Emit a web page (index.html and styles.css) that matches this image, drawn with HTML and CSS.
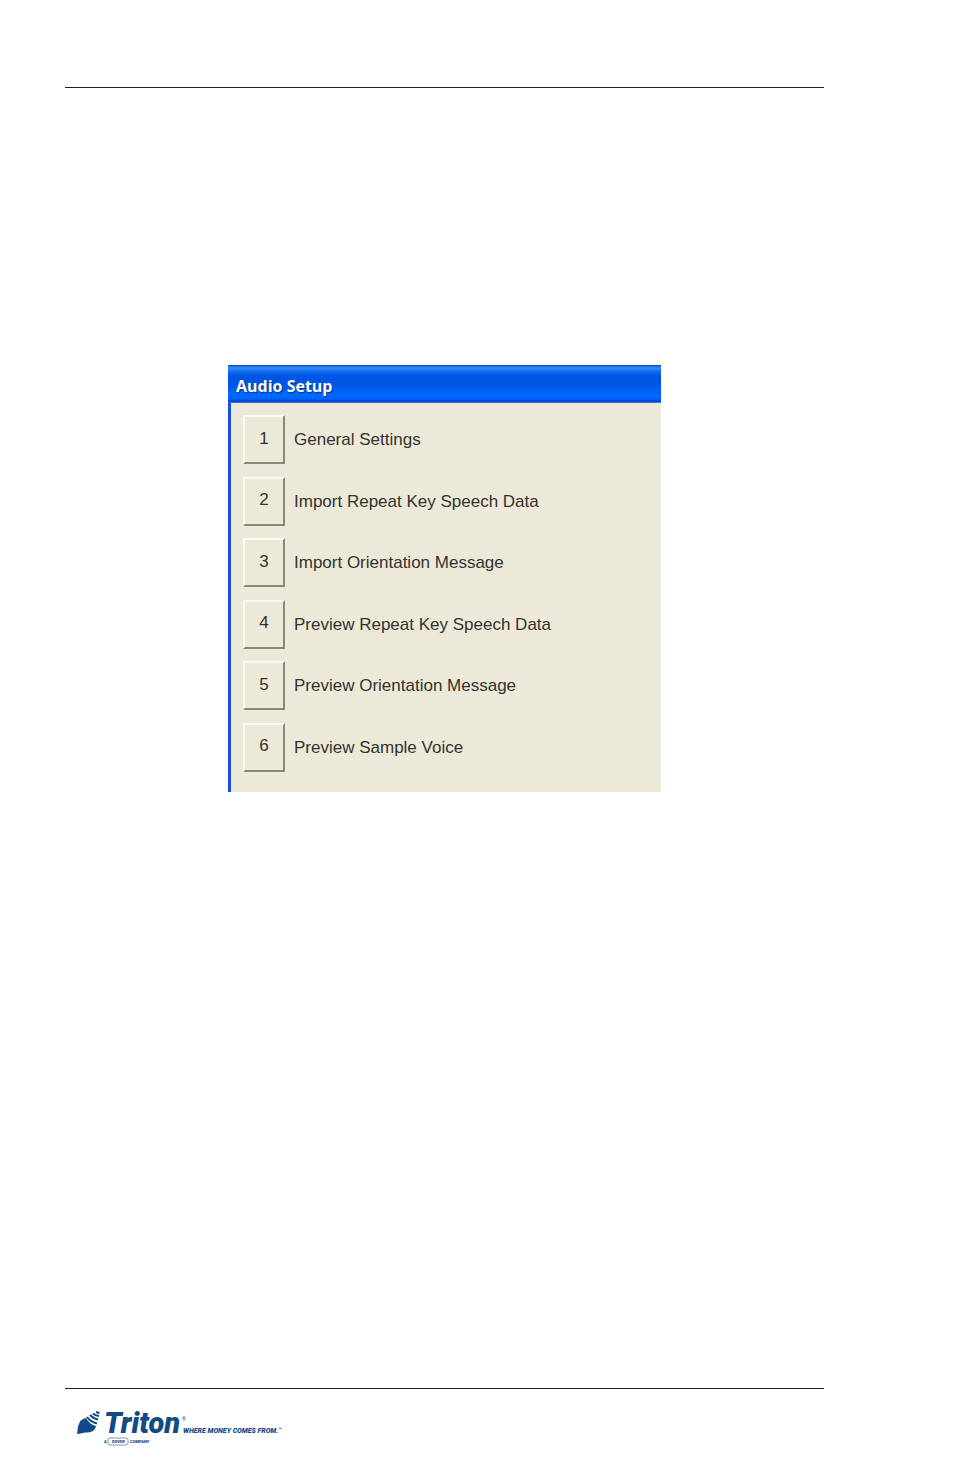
FILE: index.html
```html
<!DOCTYPE html>
<html lang="en">
<head>
<meta charset="utf-8">
<meta name="viewport" content="width=device-width, initial-scale=1">
<title>Audio Setup</title>
<link rel="stylesheet" href="styles.css">
</head>
<body>
<div class="page">
  <header class="page-header"></header>
  <main class="page-body">
    <section class="window" aria-labelledby="window-title">
      <h1 class="window-title" id="window-title">Audio Setup</h1>
      <ul class="menu">
        <li class="menu-item"><button class="key" id="key-1" aria-labelledby="key-1 label-1">1</button><label class="menu-label" id="label-1" for="key-1">General Settings</label></li>
        <li class="menu-item"><button class="key" id="key-2" aria-labelledby="key-2 label-2">2</button><label class="menu-label" id="label-2" for="key-2">Import Repeat Key Speech Data</label></li>
        <li class="menu-item"><button class="key" id="key-3" aria-labelledby="key-3 label-3">3</button><label class="menu-label" id="label-3" for="key-3">Import Orientation Message</label></li>
        <li class="menu-item"><button class="key" id="key-4" aria-labelledby="key-4 label-4">4</button><label class="menu-label" id="label-4" for="key-4">Preview Repeat Key Speech Data</label></li>
        <li class="menu-item"><button class="key" id="key-5" aria-labelledby="key-5 label-5">5</button><label class="menu-label" id="label-5" for="key-5">Preview Orientation Message</label></li>
        <li class="menu-item"><button class="key" id="key-6" aria-labelledby="key-6 label-6">6</button><label class="menu-label" id="label-6" for="key-6">Preview Sample Voice</label></li>
      </ul>
    </section>
  </main>
  <footer class="page-footer">
    <svg class="logo" width="210" height="40" viewBox="0 0 210 40" role="img" aria-label="Triton. Where money comes from.">
      <path class="logo-ink" d="M0 27 C1 24 0 21 2 17 C3 13 6 12 9 11 C11 15 15 18 19 19 C18 24 14 25.500 9 25.500 C6 25.500 3 27 0 27Z"/>
      <path class="logo-stroke" d="M10 10 Q13 14.500 20 16.500 M13 8 Q16 11.500 21 12.500 M16 6.500 Q18 8.500 22 9 M19 5 L22.500 6"/>
      <text class="logo-word" x="27" y="26">Triton</text>
      <text class="logo-reg" x="105" y="14">®</text>
      <text class="logo-tag" x="106" y="26">WHERE MONEY COMES FROM.<tspan class="logo-reg" dy="-2">™</tspan></text>
      <text class="logo-sub" x="27" y="36">A</text>
      <rect class="logo-badge" x="31" y="31" width="20" height="7" rx="2"/>
      <text class="logo-sub" x="35" y="36">DOVER</text>
      <text class="logo-small" x="53" y="36">COMPANY</text>
    </svg>
  </footer>
</div>
</body>
</html>
```
FILE: styles.css
```css
* { box-sizing: border-box; }

body {
  margin: 0;
  background: #fff;
  font-family: "Liberation Sans", Arial, sans-serif;
  color: #333330;
}

.page {
  min-height: 100vh;
  padding: 0 130px 0 65px;
  display: flex;
  flex-direction: column;
}

.page-header {
  height: 88px;
  border-bottom: 1px solid #222;
}

.page-body {
  flex: 1;
  padding: 277px 0 48px;
}

.window {
  width: 100%;
  max-width: 433px;
  margin: 0 auto;
  border-left: 3px solid #1650e0;
  background: #ece9d8;
}

.window-title {
  margin: 0 0 0 -3px;
  padding: 4px 8px 0;
  height: 38px;
  font: bold 16px/34px "Open Sans", "Noto Sans", sans-serif;
  color: #fff;
  text-shadow: 1px 1px 1px #0a2f8c;
  background: linear-gradient(#0a4bc0 0, #3390fb 3px, #1470f0 6px, #0055e4 11px, #0055e4 20px, #0068ff 29px, #0068ff 33px, #003fc8 37px, #7e9fe0 38px);
}

.menu {
  list-style: none;
  margin: 0;
  padding: 12px;
  padding-bottom: 20px;
  min-height: 389px;
  display: flex;
  flex-direction: column;
  justify-content: space-between;
}

.menu-item {
  display: flex;
  align-items: center;
  gap: 9px;
}

.key {
  width: 42px;
  height: 49px;
  padding: 0 0 2px;
  border: 2px solid;
  border-color: #fbfaf2 #8a8778 #8a8778 #fbfaf2;
  background: #ece9d8;
  font: 17px/20px "Liberation Sans", Arial, sans-serif;
  color: #33332f;
}

.menu-label {
  padding-top: 1px;
  font-size: 17px;
  line-height: 20px;
}

.page-footer {
  height: 87px;
  padding: 18px 12px 0;
  border-top: 1px solid #222;
}

.logo {
  display: block;
  overflow: visible;
}

.logo-ink { fill: #124a86; }
.logo-stroke { fill: none; stroke: #124a86; stroke-width: 2; }
.logo-badge { fill: none; stroke: #7d9cc0; stroke-width: 1; }

.logo-word,
.logo-reg,
.logo-tag,
.logo-sub,
.logo-small {
  fill: #124a86;
  font-family: Roboto, sans-serif;
}

.logo-word { font-size: 29px; font-weight: 900; font-style: italic; }
.logo-tag { font-size: 7px; font-weight: 900; font-style: italic; }
.logo-reg { font-size: 5px; }
.logo-sub { font-size: 4px; font-weight: 900; }
.logo-small { font-size: 4px; font-weight: 900; }
```
